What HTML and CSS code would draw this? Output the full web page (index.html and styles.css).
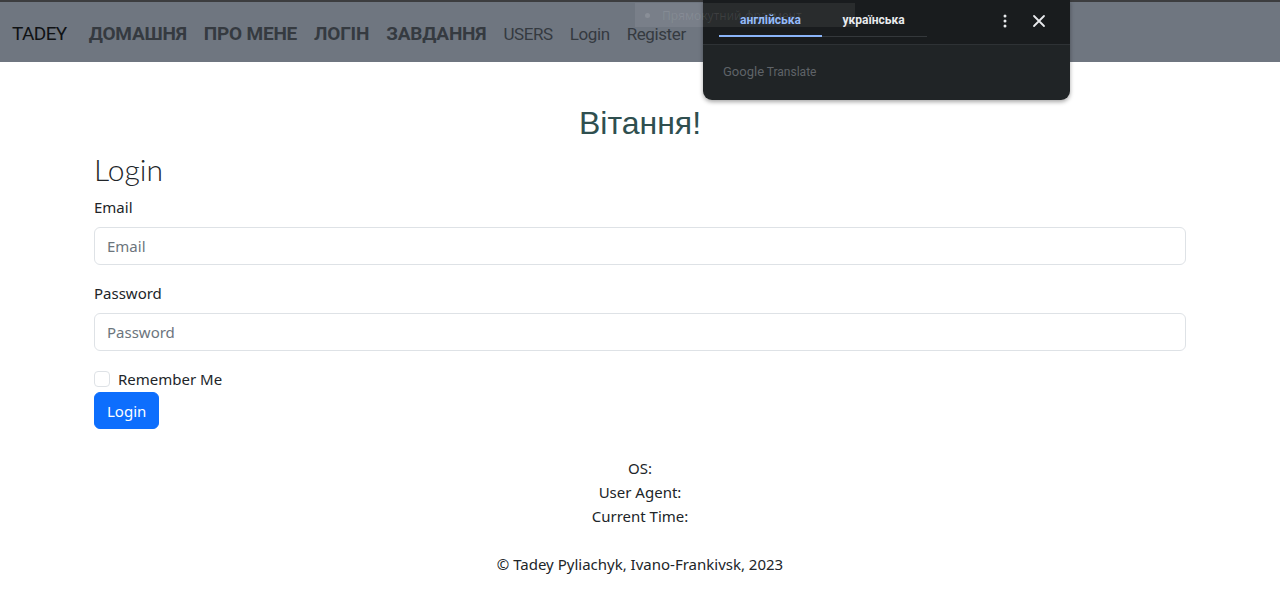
FILE: index.html
```html
<!DOCTYPE html>
<html lang="uk">
<head>
<meta charset="utf-8">
<title>Login</title>
<link rel="stylesheet" href="styles.css">
</head>
<body>
<nav class="navbar">
  <a class="brand" href="#">TADEY</a>
  <ul class="nav-links">
    <li><a class="bold" href="#">ДОМАШНЯ</a></li>
    <li><a class="bold" href="#">ПРО МЕНЕ</a></li>
    <li><a class="bold" href="#">ЛОГІН</a></li>
    <li><a class="bold" href="#">ЗАВДАННЯ</a></li>
    <li><a href="#">USERS</a></li>
    <li><a href="#">Login</a></li>
    <li><a href="#">Register</a></li>
  </ul>
  <div class="translate">
    <div class="tr-head">
      <div class="tr-tabs">
        <span class="tr-tab active">англійська</span>
        <span class="tr-tab">українська</span>
      </div>
      <div class="tr-icons">
        <svg width="16" height="16" viewBox="0 0 16 16"><circle cx="8" cy="3" r="1.5" fill="#e8eaed"/><circle cx="8" cy="8" r="1.5" fill="#e8eaed"/><circle cx="8" cy="13" r="1.5" fill="#e8eaed"/></svg>
        <svg width="16" height="16" viewBox="0 0 16 16"><path d="M3 3L13 13M13 3L3 13" stroke="#e8eaed" stroke-width="1.8" stroke-linecap="round"/></svg>
      </div>
    </div>
    <div class="tr-body"><span class="g">Google</span> Translate</div>
  </div>
  <div class="snip-tip"><span class="snip-dot"></span><span class="snip-text">Прямокутний фрагмент</span></div>
</nav>

<main class="container">
  <h2 class="greeting">Вітання!</h2>
  <h1 class="title">Login</h1>
  <form class="form">
    <div class="field">
      <label class="label" for="email">Email</label>
      <input class="input" id="email" type="email" placeholder="Email">
    </div>
    <div class="field">
      <label class="label" for="pw">Password</label>
      <input class="input" id="pw" type="password" placeholder="Password">
    </div>
    <label class="check"><span class="box"></span>Remember Me</label>
    <button class="btn" type="button">Login</button>
  </form>
  <div class="info">
    <p>OS:</p>
    <p>User Agent:</p>
    <p>Current Time:</p>
  </div>
  <footer class="footer">© Tadey Pyliachyk, Ivano-Frankivsk, 2023</footer>
</main>
</body>
</html>
```

FILE: styles.css
```css
* { box-sizing: border-box; }
html, body { margin: 0; padding: 0; }
body {
  font-family: "Noto Sans", "Open Sans", sans-serif;
  color: #212529;
  background: #fff;
  font-size: 15px;
}
.navbar {
  position: relative;
  height: 62px;
  background: #6f7680;
  border-top: 2px solid #3c3d3f;
  display: flex;
  align-items: center;
  padding: 3px 12px 0;
  gap: 22px;
}
.brand {
  font-family: "Roboto", sans-serif;
  font-size: 19px;
  letter-spacing: -0.6px;
  color: #101214;
  text-decoration: none;
}
.nav-links {
  list-style: none;
  margin: 0;
  padding: 0;
  display: flex;
  align-items: center;
  gap: 17px;
}
.nav-links a {
  font-family: "Roboto", sans-serif;
  font-size: 17px;
  letter-spacing: -0.4px;
  color: #353a40;
  text-decoration: none;
}
.nav-links a.bold {
  font-weight: 700;
  font-size: 19px;
  letter-spacing: -0.2px;
}
.snip-tip {
  position: absolute;
  left: 635px;
  top: 1px;
  width: 220px;
  height: 24px;
  background: rgba(255,255,255,0.07);
  display: flex;
  align-items: center;
  padding-left: 10px;
  gap: 12px;
  white-space: nowrap;
}
.snip-text { color: rgba(255,255,255,0.09); font-size: 12px; }
.snip-dot { flex: none; width: 5px; height: 5px; background: rgba(255,255,255,0.12); border-radius: 50%; }
.translate {
  position: absolute;
  left: 703px;
  top: -2px;
  width: 367px;
  height: 100px;
  background: #202426;
  border-radius: 0 0 9px 9px;
  box-shadow: 0 2px 4px rgba(0,0,0,0.35);
  font-family: "Roboto", sans-serif;
}
.tr-head {
  height: 45px;
  background: #191c1e;
  border-bottom: 1px solid #2e3235;
  display: flex;
  align-items: flex-start;
  justify-content: space-between;
  padding: 0 16px;
}
.tr-tabs {
  display: flex;
  height: 37px;
  border-bottom: 1px solid #34383b;
  width: 208px;
}
.tr-tab {
  width: 103px;
  padding-top: 13px;
  text-align: center;
  font-size: 12px;
  font-weight: 700;
  color: #e8eaed;
}
.tr-tab.active {
  color: #8ab4f8;
  border-bottom: 2px solid #8ab4f8;
  margin-bottom: -1px;
}
.tr-icons {
  display: flex;
  gap: 18px;
  padding-top: 13px;
  padding-right: 7px;
}
.tr-body {
  padding: 19px 20px 0;
  font-size: 12px;
  color: #5f6368;
}
.tr-body .g { font-size: 13px; }

.container {
  margin: 0 94px;
}
.greeting {
  margin: 42px 0 0;
  text-align: center;
  font-family: "Liberation Sans", Arial, sans-serif;
  font-weight: 400;
  font-size: 32px;
  line-height: 38px;
  color: #2f4f4f;
}
.title {
  margin: 7px 0 0;
  font-family: "Lato", sans-serif;
  font-weight: 300;
  font-size: 30px;
  line-height: 40px;
  color: #212529;
}
.field { margin-bottom: 17px; }
.field + .field { margin-bottom: 10px; }
.label {
  display: block;
  font-size: 15px;
  line-height: 22px;
  margin: 7px 0 9px;
  color: #212529;
}
.input {
  display: block;
  width: 100%;
  height: 38px;
  border: 1px solid #dee2e6;
  border-radius: 6px;
  padding: 6px 12px;
  font-family: inherit;
  font-size: 15px;
  color: #212529;
}
.input::placeholder { color: #6c757d; }
.check {
  display: flex;
  align-items: center;
  gap: 8px;
  margin-top: 18px;
  line-height: 20px;
  font-size: 15px;
}
.box {
  width: 16px;
  height: 16px;
  border: 1px solid #dee2e6;
  border-radius: 4px;
}
.btn {
  margin-top: 3px;
  height: 37px;
  padding: 0 12px;
  background: #0d6efd;
  color: #fff;
  border: 1px solid #0d6efd;
  border-radius: 6px;
  font-family: inherit;
  font-size: 15px;
}
.info {
  margin-top: 27px;
  text-align: center;
}
.info p { margin: 0; line-height: 24px; }
.footer {
  margin-top: 24px;
  text-align: center;
  line-height: 24px;
}
```
